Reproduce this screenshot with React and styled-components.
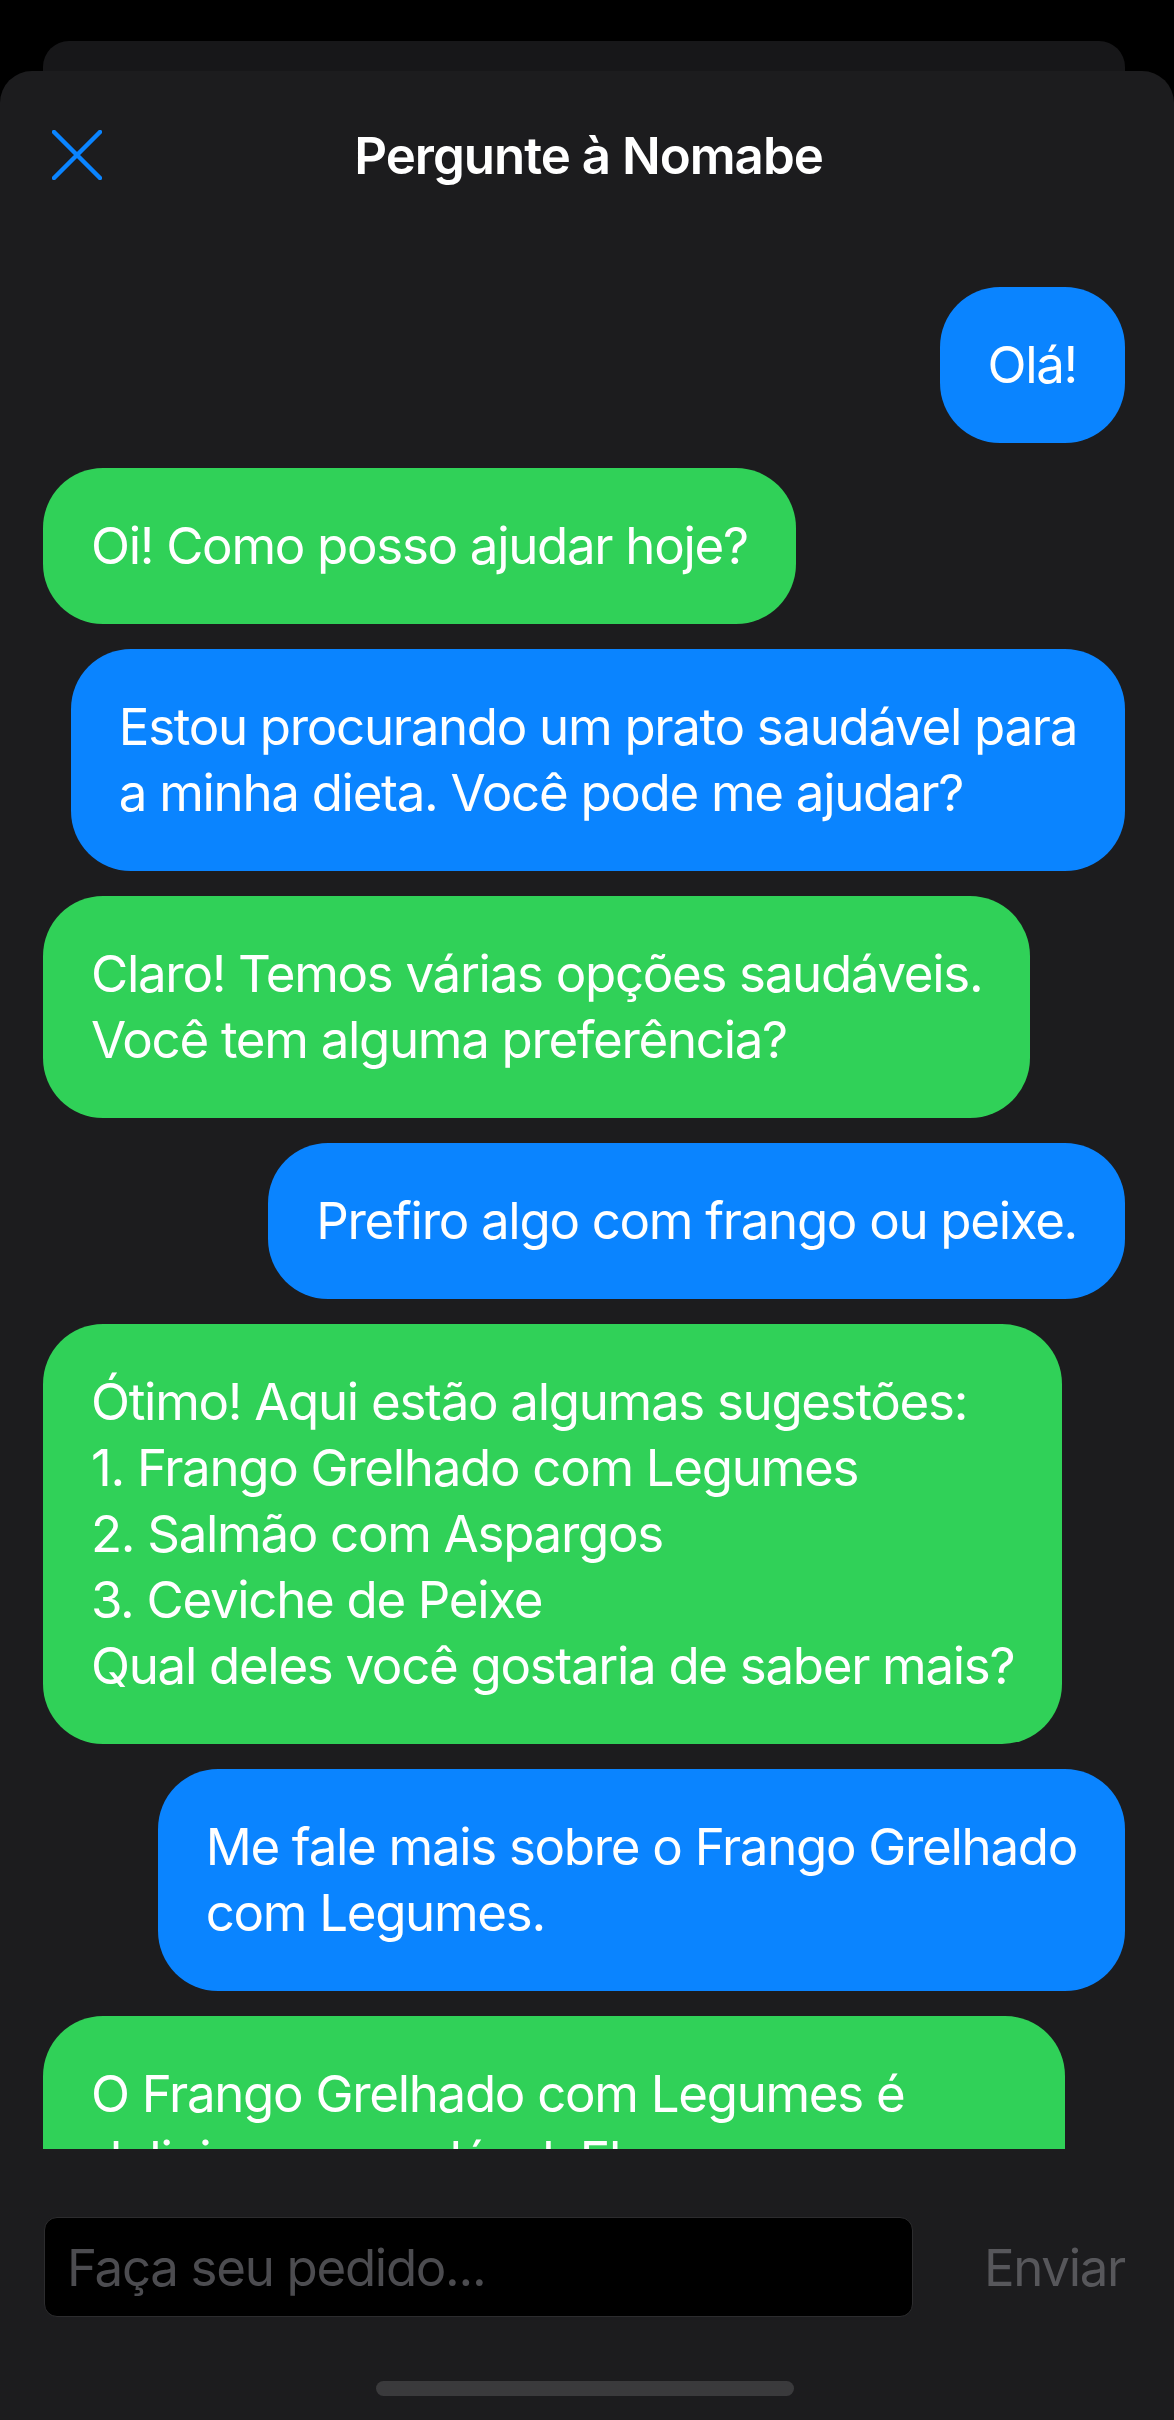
import React from "react"
import styled, { createGlobalStyle } from 'styled-components';

const messages = [
  { from: 'user', text: 'Olá!' },
  { from: 'bot', text: 'Oi! Como posso ajudar hoje?' },
  { from: 'user', text: 'Estou procurando um prato saudável para\na minha dieta. Você pode me ajudar?' },
  { from: 'bot', text: 'Claro! Temos várias opções saudáveis.\nVocê tem alguma preferência?' },
  { from: 'user', text: 'Prefiro algo com frango ou peixe.' },
  {
    from: 'bot',
    text: 'Ótimo! Aqui estão algumas sugestões:\n1. Frango Grelhado com Legumes\n2. Salmão com Aspargos\n3. Ceviche de Peixe\nQual deles você gostaria de saber mais?',
  },
  { from: 'user', text: 'Me fale mais sobre o Frango Grelhado\ncom Legumes.' },
  {
    from: 'bot',
    text: 'O Frango Grelhado com Legumes é\ndelicioso e saudável. Ele vem com\npeito de frango e legumes frescos como',
  },
];

const CloseIcon = () => (
  <svg width="50" height="50" viewBox="0 0 50 50" fill="none">
    <path d="M2 2 L48 48 M48 2 L2 48" stroke="#0a84ff" strokeWidth="4.5" strokeLinecap="round" />
  </svg>
);

const App = () => {
  return (
    <>
      <GlobalStyle />
      <Screen>
        <BackCard />
        <Sheet>
          <Header>
            <CloseButton aria-label="Fechar">
              <CloseIcon />
            </CloseButton>
            <Title>Pergunte à Nomabe</Title>
            <span />
          </Header>
          <MessageList>
            {messages.map((m, i) => (
              <Bubble key={i} $from={m.from}>{m.text}</Bubble>
            ))}
          </MessageList>
          <Footer>
            <InputRow>
              <Input placeholder="Faça seu pedido..." />
              <SendButton disabled>Enviar</SendButton>
            </InputRow>
            <HomeIndicator />
          </Footer>
        </Sheet>
      </Screen>
    </>
  )
}

const GlobalStyle = createGlobalStyle`
  html, body {
    margin: 0;
    padding: 0;
    background: #000;
  }
  * {
    box-sizing: border-box;
  }
`;

const Screen = styled.div`
  width: 1174px;
  height: 2420px;
  overflow: hidden;
  background: #000;
  padding-top: 41px;
  display: flex;
  flex-direction: column;
  font-family: 'Inter', 'Noto Sans', sans-serif;
  color: #fff;
`;

const BackCard = styled.div`
  height: 30px;
  margin: 0 49px 0 43px;
  background: #171719;
  border-radius: 26px 26px 0 0;
  flex-shrink: 0;
`;

const Sheet = styled.div`
  flex: 1;
  min-height: 0;
  background: #1c1c1e;
  border-radius: 32px 32px 0 0;
  display: flex;
  flex-direction: column;
`;

const Header = styled.div`
  height: 168px;
  flex-shrink: 0;
  display: grid;
  grid-template-columns: 1fr auto 1fr;
  align-items: center;
  padding: 0 49px 0 52px;
`;

const CloseButton = styled.button`
  width: 50px;
  height: 50px;
  padding: 0;
  border: none;
  background: none;
  display: flex;
`;

const Title = styled.h1`
  margin: 0;
  font-size: 51px;
  font-weight: 600;
  letter-spacing: -1px;
  color: #fff;
`;

const MessageList = styled.div`
  flex: 1;
  min-height: 0;
  overflow: hidden;
  display: flex;
  flex-direction: column;
  gap: 25px;
  padding: 48px 49px 0 43px;
`;

const Bubble = styled.div`
  align-self: ${p => (p.$from === 'user' ? 'flex-end' : 'flex-start')};
  background: ${p => (p.$from === 'user' ? '#0a84ff' : '#30d158')};
  color: #fff;
  padding: 45px 48px;
  border-radius: 60px;
  font-size: 51px;
  line-height: 66px;
  letter-spacing: -1.3px;
  white-space: pre-line;
  flex-shrink: 0;
`;

const Footer = styled.div`
  flex-shrink: 0;
  padding: 68px 0 24px;
  display: flex;
  flex-direction: column;
`;

const InputRow = styled.div`
  height: 100px;
  display: flex;
  align-items: center;
  padding: 0 49px 0 44px;
`;

const Input = styled.input`
  width: 869px;
  height: 100px;
  flex-shrink: 0;
  background: #000;
  border: 1.5px solid #2c2c2e;
  border-radius: 13px;
  padding: 0 22px;
  font-family: 'Inter', 'Noto Sans', sans-serif;
  font-size: 51px;
  letter-spacing: -1.3px;
  color: #fff;
  outline: none;
  &::placeholder {
    color: #4c4c50;
  }
`;

const SendButton = styled.button`
  margin-left: auto;
  padding: 0;
  border: none;
  background: none;
  font-family: 'Inter', 'Noto Sans', sans-serif;
  font-size: 51px;
  letter-spacing: -1.3px;
  color: #57575b;
`;

const HomeIndicator = styled.div`
  width: 418px;
  height: 15px;
  margin: 64px auto 0;
  border-radius: 8px;
  background: #3a3a3c;
  position: relative;
  left: -2px;
`;

export default App
